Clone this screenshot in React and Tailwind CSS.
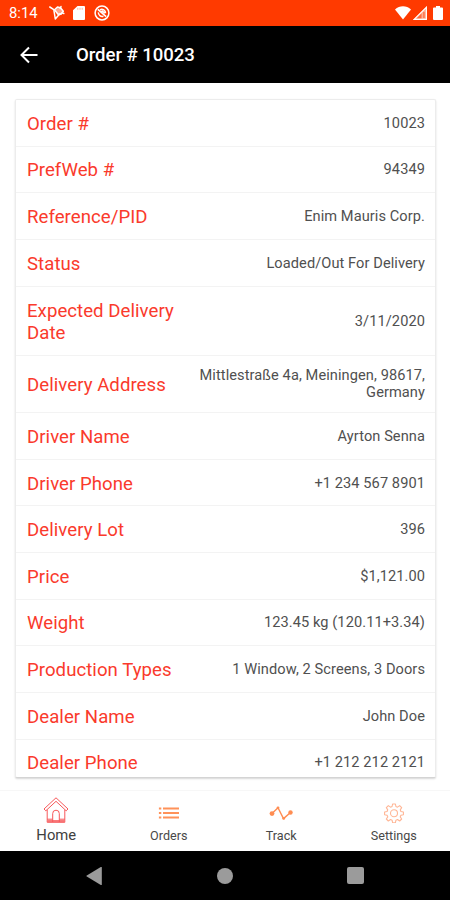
const rows = [
  { label: "Order #", value: "10023" },
  { label: "PrefWeb #", value: "94349" },
  { label: "Reference/PID", value: "Enim Mauris Corp." },
  { label: "Status", value: "Loaded/Out For Delivery" },
  { label: "Expected Delivery Date", value: "3/11/2020", height: "h-[69px]" },
  { label: "Delivery Address", value: "Mittlestraße 4a, Meiningen, 98617, Germany", height: "h-[57.5px]" },
  { label: "Driver Name", value: "Ayrton Senna" },
  { label: "Driver Phone", value: "+1 234 567 8901" },
  { label: "Delivery Lot", value: "396" },
  { label: "Price", value: "$1,121.00" },
  { label: "Weight", value: "123.45 kg (120.11+3.34)" },
  { label: "Production Types", value: "1 Window, 2 Screens, 3 Doors" },
  { label: "Dealer Name", value: "John Doe" },
  { label: "Dealer Phone", value: "+1 212 212 2121" },
]

function StatusBar() {
  return (
    <div className="flex h-[26px] shrink-0 items-center bg-[#ff3a00] pl-[9px] pr-[7px] text-white">
      <span className="w-[40px] pt-px text-[14.8px] leading-none">8:14</span>
      <DebugIcon />
      <SdCardIcon />
      <NoSyncIcon />
      <div className="ml-auto flex items-center">
        <WifiIcon />
        <SignalIcon />
        <BatteryIcon />
      </div>
    </div>
  )
}

function Header() {
  return (
    <header className="flex h-[57px] shrink-0 items-center bg-black pl-[19px] text-white">
      <button type="button" aria-label="Back">
        <svg width="20" height="18" viewBox="0 0 20 18" fill="none" stroke="currentColor" strokeWidth="2">
          <path d="M18.5 9H3M10 1.5L2.5 9l7.5 7.5" />
        </svg>
      </button>
      <h1 className="ml-[37px] pt-[2px] text-[18.6px] font-medium leading-none tracking-[-0.05px]">Order # 10023</h1>
    </header>
  )
}

function Row({ label, value, height = "h-[46.65px]" }) {
  return (
    <div className={`flex shrink-0 items-center justify-between border-b border-[#f3f3f3] px-[11px] ${height}`}>
      <span className="w-[160px] pt-[2px] text-[18.6px] leading-[22px] tracking-[0.05px] text-[#fa3a2c]">{label}</span>
      <span className="-mr-px w-[238px] pt-px text-right text-[14.6px] leading-[17px] tracking-[0.08px] text-[#505050]">{value}</span>
    </div>
  )
}

function TabItem({ icon, label, active = false }) {
  return (
    <button type="button" className="flex w-1/4 flex-col items-center">
      <span className="flex h-[37px] items-center justify-center">{icon}</span>
      <span className={active ? "text-[14.8px] leading-[15px] text-[#404040]" : "text-[12.6px] leading-[16px] text-[#484848]"}>
        {label}
      </span>
    </button>
  )
}

export default function App() {
  return (
    <div className="flex h-[900px] w-[450px] flex-col overflow-hidden bg-white font-['Roboto',sans-serif]">
      <StatusBar />
      <Header />

      <main className="min-h-0 flex-1 pl-[15px] pr-[14px] pt-[16px]">
        <div className="flex h-[679px] flex-col overflow-hidden rounded-[2px] border border-[#ececec] border-b-[#d4d4d4] bg-white shadow-[0_1px_2px_rgba(0,0,0,0.16)]">
          {rows.map((row) => (
            <Row key={row.label} {...row} />
          ))}
        </div>
      </main>

      <nav className="flex h-[61px] shrink-0 border-t border-[#f7f7f7]">
        <TabItem icon={<HomeIcon />} label="Home" active />
        <TabItem icon={<OrdersIcon />} label="Orders" />
        <TabItem icon={<TrackIcon />} label="Track" />
        <TabItem icon={<SettingsIcon />} label="Settings" />
      </nav>

      <div className="flex h-[49px] shrink-0 items-center justify-between bg-black pl-[86px] pr-[86px] text-[#9b9b9b]">
        <svg width="17" height="18" viewBox="0 0 17 18" fill="currentColor">
          <path d="M15.8 .6v16.8a.7.7 0 0 1-1 .5L.8 9.6a.7.7 0 0 1 0-1.2L14.8.1a.7.7 0 0 1 1 .5z" />
        </svg>
        <span className="h-[16px] w-[16px] rounded-full bg-[#9b9b9b]" />
        <span className="h-[17px] w-[17px] rounded-[2px] bg-[#9b9b9b]" />
      </div>
    </div>
  )
}

function DebugIcon() {
  return (
    <svg width="16" height="16" viewBox="0 0 16 16" fill="none" stroke="currentColor" strokeWidth="1.5" strokeLinecap="round" strokeLinejoin="round">
      <path d="M.8 2l4 2.6M4.8 4.6L6.3 14M6.3 14l3.4-4M9.7 10l3-1.5" />
      <path d="M5.5 4.8L8.5 2l3 .8 2.8 3.4-2 2.6-3.3.4z" fill="currentColor" fillOpacity=".55" />
      <path d="M12 1.5l-.8 2M14.8 8.5l-1.6-.6" />
    </svg>
  )
}

function SdCardIcon() {
  return (
    <svg className="ml-[8px]" width="12" height="14" viewBox="0 0 12 14" fill="currentColor">
      <path d="M4.5 0H11a1 1 0 0 1 1 1v12a1 1 0 0 1-1 1H1a1 1 0 0 1-1-1V4.2z" />
      <path d="M4.8 1.8v2M7 1.8v2M9.2 1.8v2" stroke="#ffb49b" strokeWidth="1" />
    </svg>
  )
}

function NoSyncIcon() {
  return (
    <svg className="ml-[9px]" width="16" height="16" viewBox="0 0 16 16" fill="none" stroke="currentColor" strokeWidth="1.5">
      <circle cx="8" cy="8" r="6.9" />
      <path d="M3.8 4.4l8.4 7.2M6 4.8c2.6-1.4 5.6.6 5.6 3.4M4.4 7.4c-.2 2.8 2.4 4.6 5 3.8M7.5 5.6l3.5 2.6" />
    </svg>
  )
}

function WifiIcon() {
  return (
    <svg width="16" height="14" viewBox="0 0 16 14" fill="currentColor">
      <path d="M0 3.4C4.7-.7 11.3-.7 16 3.4L8 13.6z" />
    </svg>
  )
}

function SignalIcon() {
  return (
    <svg className="ml-[2px]" width="14" height="14" viewBox="0 0 14 14">
      <path d="M14 0v14H0z" fill="#ffae94" />
      <path d="M13.4 1.3v12.1H1.1z" fill="none" stroke="#fff" strokeWidth="1.1" />
      <path d="M8.5 7.5v4.7H3.8z" fill="#ff6a3d" />
      <path d="M10 6h1.8v6H10z" fill="#ff7e57" />
    </svg>
  )
}

function BatteryIcon() {
  return (
    <svg className="ml-[6px]" width="10" height="14" viewBox="0 0 10 14" fill="currentColor">
      <path d="M3 0h4v1.5h2a1 1 0 0 1 1 1V13a1 1 0 0 1-1 1H1a1 1 0 0 1-1-1V2.5a1 1 0 0 1 1-1h2z" />
    </svg>
  )
}

function HomeIcon() {
  return (
    <svg className="mt-px" width="26" height="26" viewBox="0 0 26 26" fill="none" stroke="#f7585a" strokeWidth="1" strokeLinejoin="round">
      <path d="M1 12L13 .8 25 12l-1.8 1.8L13 4.3 2.8 13.8z" />
      <path d="M4.2 12.8v12.5h17.6V12.8M4.2 22.2h5.4M16.4 22.2h5.4M9.7 25v-8.5a3.3 3.3 0 0 1 6.6 0V25" />
      <path d="M4.5 24h17" strokeWidth="1.6" />
    </svg>
  )
}

function OrdersIcon() {
  return (
    <svg className="mt-[7px]" width="22" height="14" viewBox="0 0 22 14" fill="none" stroke="#ff9259" strokeWidth="2">
      <path d="M.9 2.5h2.4M.9 7h2.4M.9 11.5h2.4" />
      <path d="M5 2.5h16M5 7h16M5 11.5h16" />
    </svg>
  )
}

function TrackIcon() {
  return (
    <svg className="mt-[6px]" width="24" height="16" viewBox="0 0 24 16" fill="none" stroke="#ff8d52" strokeWidth="1.4" strokeLinejoin="round">
      <path d="M3 8.6l6-5.8 5.5 10.8L21.5 7.5" />
      <g fill="#ff8d52" stroke="none">
        <circle cx="3" cy="8.6" r="2.4" />
        <circle cx="9" cy="2.8" r="1.4" />
        <circle cx="14.7" cy="13.4" r="1.4" />
        <circle cx="21.5" cy="7.5" r="2.2" />
      </g>
    </svg>
  )
}

function SettingsIcon() {
  return (
    <svg className="mt-[6px]" width="20" height="20" viewBox="0 0 24 24" fill="none" stroke="#ffb696" strokeWidth="1.3" strokeLinejoin="round">
      <path d="M10.3 1.2h3.4l.6 3 1.9.8 2.6-1.8 2.4 2.4-1.7 2.6.8 1.9 3 .6v3.4l-3 .6-.8 1.9 1.7 2.6-2.4 2.4-2.6-1.8-1.9.8-.6 3h-3.4l-.6-3-1.9-.8-2.6 1.8-2.4-2.4 1.7-2.6-.8-1.9-3-.6v-3.4l3-.6.8-1.9-1.7-2.6 2.4-2.4 2.6 1.8 1.9-.8z" />
      <circle cx="12" cy="12.3" r="4.2" />
    </svg>
  )
}
